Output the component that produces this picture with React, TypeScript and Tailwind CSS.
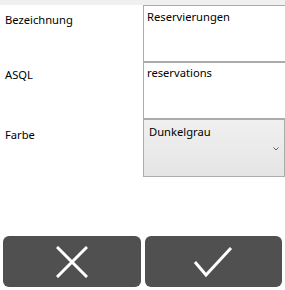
import React from "react";

const font = { fontFamily: '"Noto Sans", "Open Sans", sans-serif' };

export default function App() {
  return (
    <div className="w-[285px] h-[290px] bg-white overflow-hidden flex flex-col text-[11.2px] text-black" style={font}>
      <div className="h-[5px] bg-[#f0f0f0] shrink-0" />
      <div className="grid grid-cols-[143px_1fr]">
        <div className="pl-[5px] pt-[5px] leading-[20px]">Bezeichnung</div>
        <div className="w-[145px] h-[57px] border border-[#ababab] pl-[3px] pt-[2px] leading-[18px]">Reservierungen</div>
        <div className="pl-[5px] pt-[3px] leading-[20px]">ASQL</div>
        <div className="w-[145px] h-[57px] border border-[#ababab] pl-[3px] pt-[1px] leading-[18px]">reservations</div>
        <div className="pl-[5px] pt-[6px] leading-[20px]">Farbe</div>
        <div className="w-[142px] h-[58px] border border-[#acacac] bg-gradient-to-b from-[#f0f0f0] to-[#e5e5e5] pl-[5px] pt-[3px] leading-[18px] relative">
          Dunkelgrau
          <svg className="absolute right-[5px] top-[27px]" width="6" height="4" viewBox="0 0 6 4">
            <path d="M0.5 0.5 L3 3 L5.5 0.5" fill="none" stroke="#606060" strokeWidth="1" />
          </svg>
        </div>
      </div>
      <div className="flex-1" />
      <div className="flex gap-[4px] px-[3px] pb-[3px]">
        <button className="w-[138px] h-[51px] rounded-[6px] bg-[#505050] flex items-center justify-center">
          <svg width="32" height="32" viewBox="0 0 32 32">
            <path d="M1 1 L31 31 M31 1 L1 31" stroke="white" strokeWidth="3" fill="none" />
          </svg>
        </button>
        <button className="w-[138px] h-[51px] rounded-[6px] bg-[#505050] flex items-center justify-center">
          <svg width="40" height="32" viewBox="0 0 40 32">
            <path d="M2 16 L13 29 L38 2" stroke="white" strokeWidth="3" fill="none" />
          </svg>
        </button>
      </div>
    </div>
  );
}
